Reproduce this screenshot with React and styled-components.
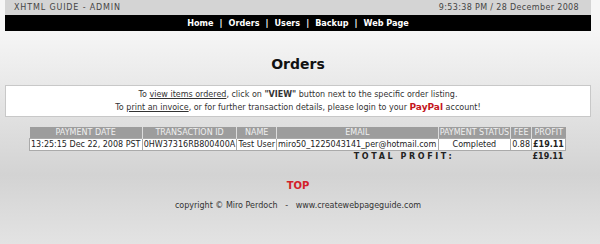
import styled, { createGlobalStyle } from "styled-components";

const GlobalStyle = createGlobalStyle`
  html, body {
    margin: 0;
    height: 100%;
  }
  body {
    background: linear-gradient(to bottom, #f6f6f6 30px, #d3d3d3 175px, #e3e3e3 244px);
    font-family: "DejaVu Sans", Verdana, sans-serif;
    color: #333;
    font-size: 8px;
  }
`;

const Page = styled.div`
  margin: 0 9px 0 5px;
`;

const TopBar = styled.div`
  height: 15px;
  background: #d4d4d4;
  display: flex;
  align-items: center;
  justify-content: space-between;
  padding: 0 12px 0 9px;
  color: #444;
  font-size: 8px;
`;

const Brand = styled.span`
  letter-spacing: ${(p) => p.$spacing || "0"};
`;

const NavBar = styled.nav`
  height: 16px;
  background: #000;
  display: flex;
  align-items: center;
  justify-content: center;
  gap: 6px;
  color: #fff;
  font-family: "DejaVu Sans Condensed", "DejaVu Sans", sans-serif;
  font-weight: bold;
  font-size: 9px;
`;

const NavLink = styled.a`
  color: #fff;
  text-decoration: none;
`;

const Pipe = styled.span`
  margin-right: 6px;
`;

const Title = styled.h1`
  margin: 0;
  padding: 23px 0 11px;
  text-align: center;
  font-size: 14px;
  font-weight: bold;
  color: #111;
  line-height: 20px;
`;

const InfoBox = styled.div`
  background: #fff;
  border: 1px solid #c8c8c8;
  padding: 3px 0 2px;
  text-align: center;
  line-height: 12px;
  color: #333;
`;

const Link = styled.a`
  color: #333;
  text-decoration: underline;
`;

const PayPal = styled.b`
  color: #c4161c;
  font-size: 9px;
`;

const Table = styled.table`
  margin: 10px 0 0 24px;
  width: 537px;
  border-collapse: collapse;
  font-size: 8px;
`;

const Th = styled.th`
  background: #9d9d9d;
  color: #f0f0f0;
  font-weight: normal;
  height: 11px;
  padding: 0 1px;
  white-space: nowrap;
  border-right: 1px solid #ddd;
  &:last-child {
    border-right: none;
  }
`;

const Td = styled.td`
  background: ${(p) => (p.$plain ? "transparent" : "#fff")};
  border: ${(p) => (p.$plain ? "none" : "1px solid #aaa")};
  text-align: ${(p) => p.$align || "left"};
  font-weight: ${(p) => (p.$bold ? "bold" : "normal")};
  letter-spacing: ${(p) => p.$spaced || "0"};
  height: 11px;
  padding: 0 1px;
  white-space: nowrap;
  color: #222;
`;

const TopLink = styled.a`
  display: block;
  text-align: center;
  margin-top: 18px;
  color: #d3212a;
  font-weight: bold;
  font-size: 10px;
  text-decoration: none;
`;

const Footer = styled.div`
  text-align: center;
  margin-top: 10px;
  color: #333;
`;

const navItems = ["Home", "Orders", "Users", "Backup", "Web Page"];

export default function App() {
  return (
    <>
      <GlobalStyle />
      <Page>
        <TopBar>
          <Brand $spacing="0.85px">XHTML GUIDE - ADMIN</Brand>
          <Brand $spacing="0.35px">9:53:38 PM / 28 December 2008</Brand>
        </TopBar>
        <NavBar>
          {navItems.map((item, i) => (
            <span key={item}>
              {i > 0 && <Pipe>|</Pipe>}
              <NavLink href="#">{item}</NavLink>
            </span>
          ))}
        </NavBar>
        <Title>Orders</Title>
        <InfoBox>
          To <Link href="#">view items ordered</Link>, click on <b>"VIEW"</b>{" "}
          button next to the specific order listing.
          <br />
          To <Link href="#">print an invoice</Link>, or for further transaction
          details, please login to your <PayPal>PayPal</PayPal> account!
        </InfoBox>
        <Table>
          <thead>
            <tr>
              <Th>PAYMENT DATE</Th>
              <Th>TRANSACTION ID</Th>
              <Th>NAME</Th>
              <Th>EMAIL</Th>
              <Th>PAYMENT STATUS</Th>
              <Th>FEE</Th>
              <Th>PROFIT</Th>
            </tr>
          </thead>
          <tbody>
            <tr>
              <Td>13:25:15 Dec 22, 2008 PST</Td>
              <Td>0HW37316RB800400A</Td>
              <Td>Test User</Td>
              <Td>miro50_1225043141_per@hotmail.com</Td>
              <Td $align="center">Completed</Td>
              <Td>0.88</Td>
              <Td $bold>£19.11</Td>
            </tr>
            <tr>
              <Td $plain colSpan={3}></Td>
              <Td $plain colSpan={3} $align="center" $bold $spaced="2.6px">
                TOTAL PROFIT:
              </Td>
              <Td $plain $bold>£19.11</Td>
            </tr>
          </tbody>
        </Table>
        <TopLink href="#">TOP</TopLink>
        <Footer>
          copyright © Miro Perdoch &nbsp; - &nbsp; www.createwebpageguide.com
        </Footer>
      </Page>
    </>
  );
}
